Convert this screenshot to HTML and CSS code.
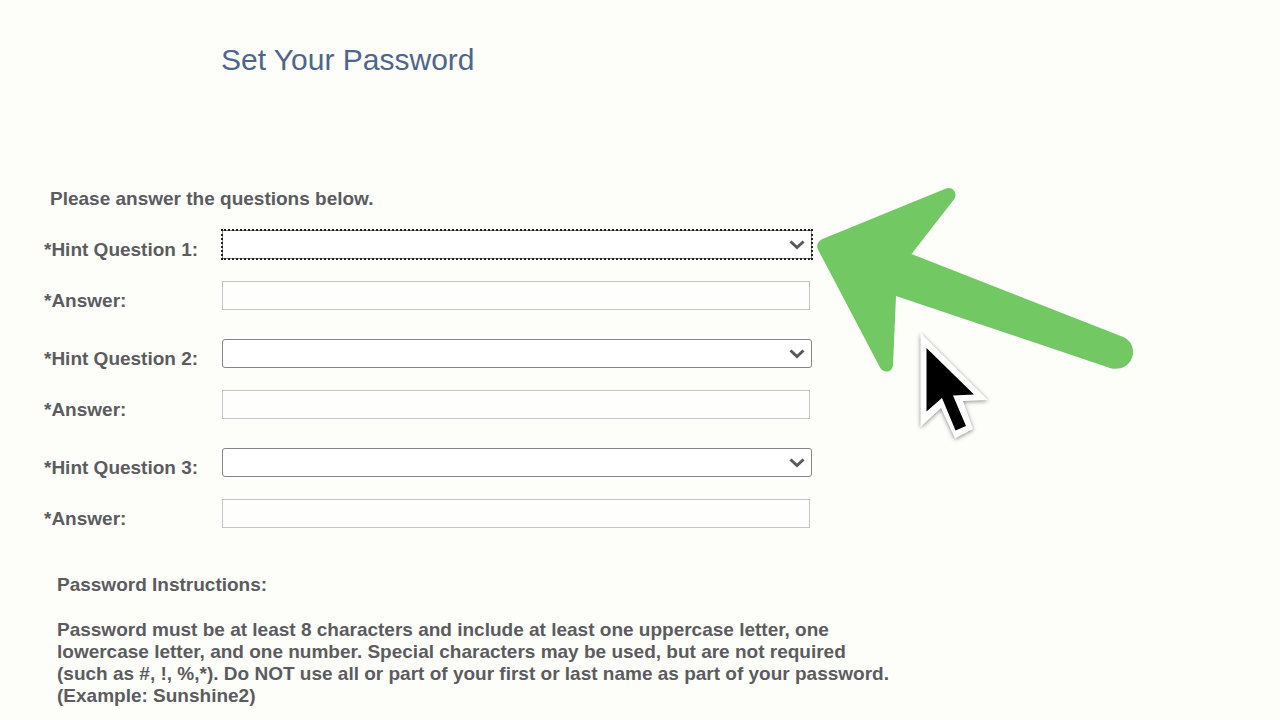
FILE: index.html
```html
<!DOCTYPE html>
<html lang="en">
<head>
<meta charset="utf-8">
<meta name="viewport" content="width=device-width, initial-scale=1">
<title>Set Your Password</title>
<link rel="stylesheet" href="styles.css">
</head>
<body>
<main class="page">
  <h1 class="title">Set Your Password</h1>
  <p class="intro">Please answer the questions below.</p>
  <form class="form">
    <div class="group">
      <label class="label" for="q1">*Hint Question 1:</label>
      <div class="field">
        <select class="select is-focused" id="q1"><option></option></select>
        <svg class="chevron" viewBox="0 0 16 10" aria-hidden="true"><path d="M1.500 1.500 8 7.500 14.500 1.500"/></svg>
      </div>
      <label class="label" for="a1">*Answer:</label>
      <input class="input" id="a1" type="text">
    </div>
    <div class="group">
      <label class="label" for="q2">*Hint Question 2:</label>
      <div class="field">
        <select class="select" id="q2"><option></option></select>
        <svg class="chevron" viewBox="0 0 16 10" aria-hidden="true"><path d="M1.500 1.500 8 7.500 14.500 1.500"/></svg>
      </div>
      <label class="label" for="a2">*Answer:</label>
      <input class="input" id="a2" type="text">
    </div>
    <div class="group">
      <label class="label" for="q3">*Hint Question 3:</label>
      <div class="field">
        <select class="select" id="q3"><option></option></select>
        <svg class="chevron" viewBox="0 0 16 10" aria-hidden="true"><path d="M1.500 1.500 8 7.500 14.500 1.500"/></svg>
      </div>
      <label class="label" for="a3">*Answer:</label>
      <input class="input" id="a3" type="text">
    </div>
  </form>
  <section class="instructions">
    <h2 class="subtitle">Password Instructions:</h2>
    <p class="text">Password must be at least 8 characters and include at least one uppercase letter, one<br>
    lowercase letter, and one number. Special characters may be used, but are not required<br>
    (such as #, !, %,*). Do NOT use all or part of your first or last name as part of your password.<br>
    (Example: Sunshine2)</p>
  </section>
</main>
<!-- Pointer arrow and mouse cursor over the form -->
<svg class="overlay" viewBox="810 180 330 270" aria-hidden="true">
  <path class="arrow" d="M822.500 239 946 188.500C952.500 186 958 193 954.300 199L911.500 254 1122 336.500C1131 340 1134 347 1132.800 355C1130.500 366 1120 371 1110 368L896 296 893 365C892.500 372.500 883.500 374 880 367.500L818 249.500C816 245 818 241 822.500 239Z"/>
  <path class="cursor-edge" d="M920.500 333 988 400 963 401 973 429 955 438.500 941 408 920.500 427Z"/>
  <path class="cursor" d="M926.500 348 974 394.500 953 395.500 966 426 955.500 430.500 942 398 926.500 411.500Z"/>
</svg>
</body>
</html>
```
FILE: styles.css
```css
* { box-sizing: border-box; }
body {
  margin: 0;
  background: #fdfefa;
  color: #5b5b60;
  font: bold 19px/22px "Liberation Sans", Arial, sans-serif;
  overflow-x: hidden;
}
.page { padding: 40px 44px 0; }
.title {
  margin: 0 0 108px 177px;
  color: #4d658f;
  font-size: 30px;
  font-weight: normal;
  line-height: 40px;
}
.intro { margin: 0 0 20px 6px; }
.form { display: grid; gap: 29px; }
.group {
  display: grid;
  grid-template-columns: 178px minmax(0, 590px);
  row-gap: 22px;
}
.label { padding-top: 9px; height: 29px; }
.field { display: flex; position: relative; }
.select, .input {
  width: 100%;
  height: 29px;
  margin: 0;
  padding: 0 8px;
  background: #fff;
  font: inherit;
  color: inherit;
}
.select {
  appearance: none;
  border: 1px solid #858585;
  border-radius: 3px;
}
.select.is-focused {
  border-radius: 0;
  outline: 2px dotted #222;
  outline-offset: -1px;
}
.chevron {
  position: absolute;
  right: 7px;
  top: 10px;
  width: 16px;
  height: 10px;
  pointer-events: none;
}
.chevron path { fill: none; stroke: #59595b; stroke-width: 3; }
.input { width: calc(100% - 2px); border: 1px solid #c4c4c4; border-radius: 0; background: #fefefc; }
.instructions { padding: 46px 0 8px 13px; }
.subtitle { margin: 0 0 23px; font-size: inherit; }
.text { margin: 0; }
.overlay {
  position: absolute;
  left: 810px;
  top: 180px;
  width: 330px;
  height: 270px;
  pointer-events: none;
}
.arrow { fill: #72c863; }
.cursor-edge { fill: #fff; filter: drop-shadow(0 1px 2px rgba(0, 0, 0, 0.45)); }
.cursor { fill: #000; }
```
